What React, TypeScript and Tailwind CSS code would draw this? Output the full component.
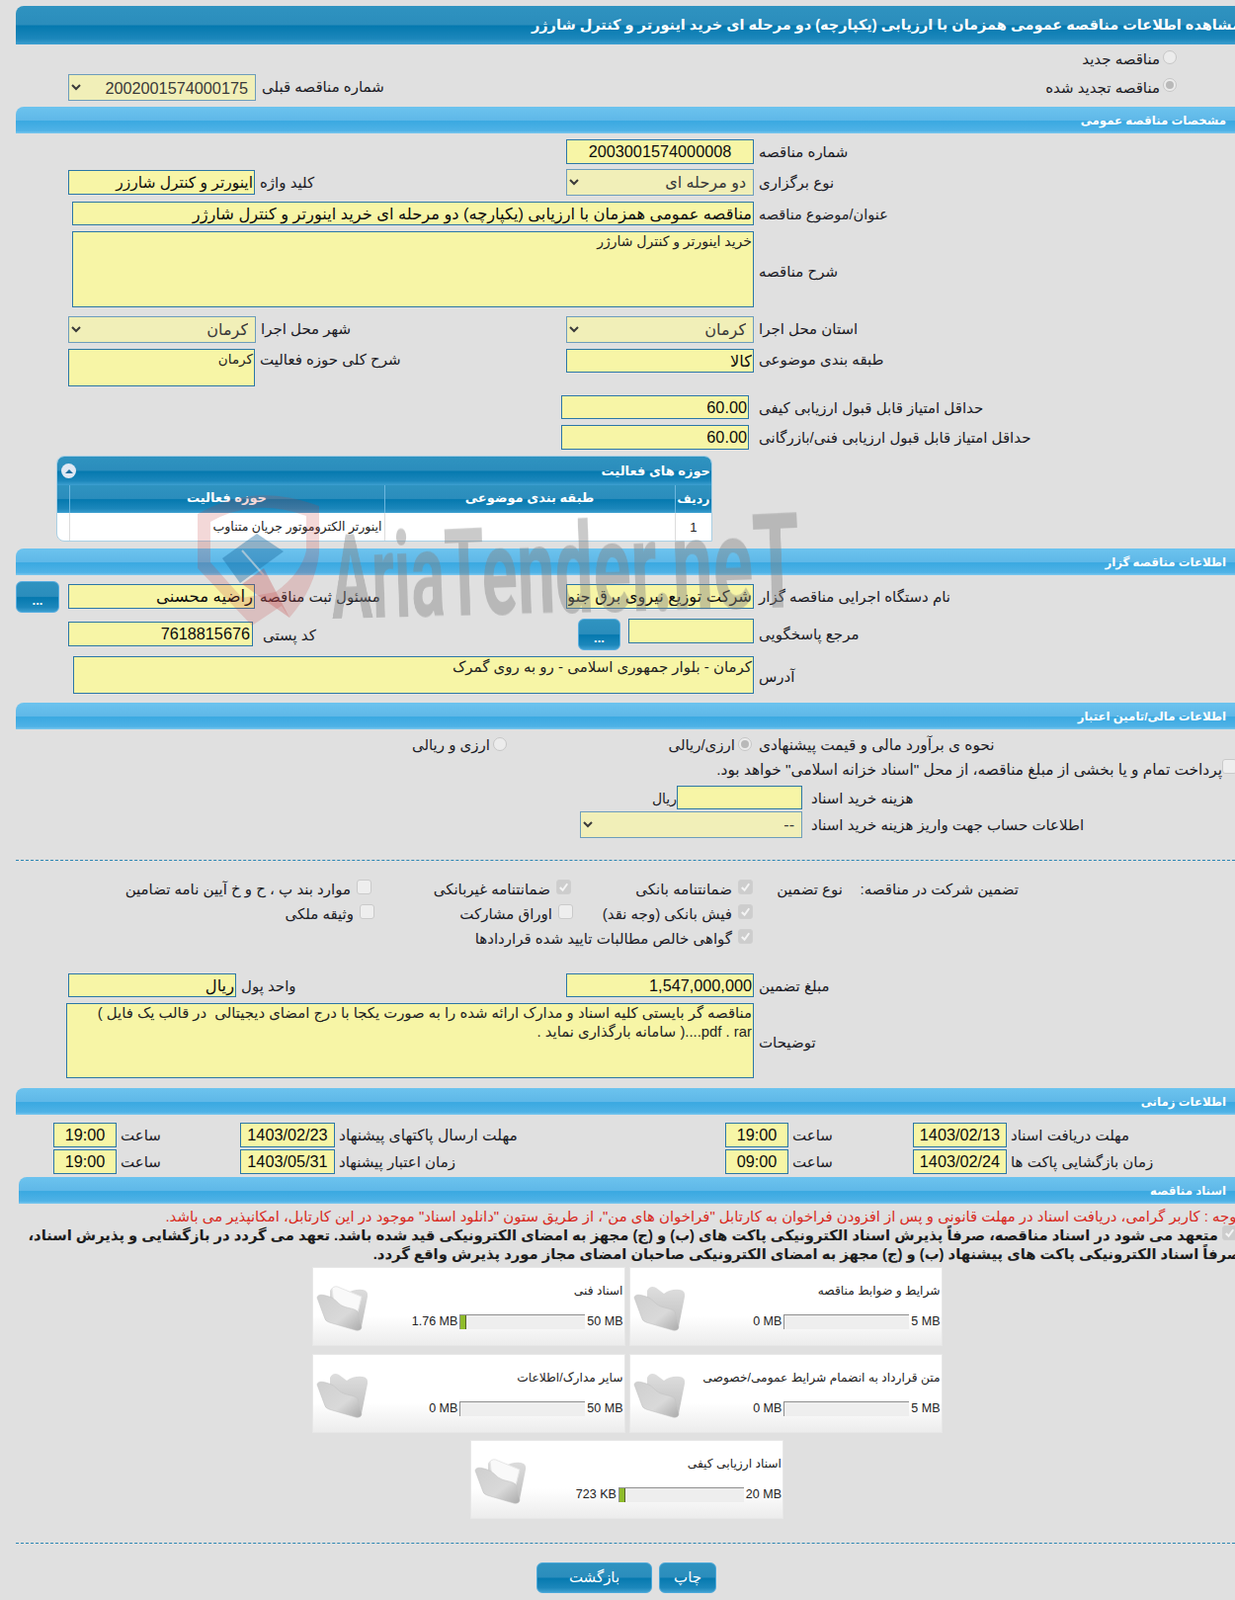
import React from 'react';

const blueBar = 'bg-[linear-gradient(#2f93c0_0%,#2b8dbc_48%,#0579af_52%,#1c87bb_85%,#3d9fd0_100%)]';
const skyBar = 'bg-[linear-gradient(#6cc3ee_0%,#5fb8e8_50%,#3aa9e1_54%,#4fb2e6_90%,#7cc8ee_100%)]';

type LabelProps = { children: React.ReactNode; className?: string; size?: string };

const Label = ({ children, className = '', size = 'text-[15px]' }: LabelProps) => (
  <span dir="rtl" className={`whitespace-nowrap pt-[1px] leading-[24px] text-[#1b1b25] ${size} ${className}`}>
    {children}
  </span>
);

type FieldProps = { value: string; className?: string; size?: string };

const Field = ({ value, className = 'h-[25px]', size = 'text-[16.25px]' }: FieldProps) => (
  <input
    readOnly
    dir="rtl"
    value={value}
    className={`shrink-0 border border-[#2b77a6] bg-[#f7f5a6] px-[1px] text-[#0c0c0c] outline-none ${size} ${className}`}
  />
);

const Area = ({ value, className = '' }: { value: string; className?: string }) => (
  <textarea
    readOnly
    dir="rtl"
    value={value}
    className={`shrink-0 resize-none overflow-hidden border border-[#2b77a6] bg-[#f7f5a6] px-[1px] leading-[19px] text-[#222] outline-none ${className}`}
  />
);

const Picker = ({ value, className = '', size = 'text-[16px]' }: FieldProps) => (
  <select
    dir="rtl"
    defaultValue={value}
    className={`h-[27px] shrink-0 border border-[#6d9dbb] bg-[#f1efb8] pl-[7px] pr-[3px] text-[#3a3a3a] outline-none ${size} ${className}`}
  >
    <option>{value}</option>
  </select>
);

const Radio = ({ checked = false }: { checked?: boolean }) => (
  <span className="mt-[2px] flex h-[14px] w-[14px] shrink-0 items-center justify-center rounded-full border border-[#c6c6c6] bg-[#ececec]">
    {checked && <span className="h-[8px] w-[8px] rounded-full bg-[#b9b9b9]" />}
  </span>
);

const Box = ({ checked = false, className = 'mt-[1px]' }: { checked?: boolean; className?: string }) => (
  <span
    className={`flex h-[15px] w-[15px] shrink-0 items-center justify-center rounded-[3px] border ${
      checked ? 'border-[#cfcfcf] bg-[#cdcdcd]' : 'border-[#cacaca] bg-[#eeeeee]'
    } ${className}`}
  >
    {checked && (
      <svg viewBox="0 0 14 14" className="h-[13px] w-[13px]">
        <path d="M3 7.5 L6 10.5 L11 3.5" fill="none" stroke="#f4f4f4" strokeWidth="2.2" />
      </svg>
    )}
  </span>
);

const Section = ({ title, className = 'ml-[16px]' }: { title: string; className?: string }) => (
  <div className={`flex h-[27px] items-center justify-end rounded-tl-[8px] pr-[9px] ${skyBar} ${className}`}>
    <span dir="rtl" className="text-[11.75px] font-bold text-white">
      {title}
    </span>
  </div>
);

const CheckItem = ({ text, checked, className }: { text: string; checked?: boolean; className: string }) => (
  <div className={`flex shrink-0 gap-[6px] ${className}`}>
    <Box checked={checked} />
    <Label className="-mt-[2px]">{text}</Label>
  </div>
);

const Folder = ({ filled }: { filled?: boolean }) => (
  <svg viewBox="0 0 54 48" className="h-[48px] w-[54px] shrink-0">
    <defs>
      <linearGradient id="folderBack" x1="0" y1="0" x2="0" y2="1">
        <stop offset="0" stopColor="#dedede" />
        <stop offset="1" stopColor="#bdbdbd" />
      </linearGradient>
      <linearGradient id="folderFront" x1="0" y1="0" x2="1" y2="1">
        <stop offset="0" stopColor="#cfcfcf" />
        <stop offset="0.6" stopColor="#d9d9d9" />
        <stop offset="1" stopColor="#ababab" />
      </linearGradient>
    </defs>
    <path d="M14 6 Q17 0 23 3 L31 9 Q38 4 47 5 Q53 6 52 12 L46 42 Q45 47 41 45 L14 30 Z" fill="url(#folderBack)" />
    {filled && <path d="M16 4 Q19 0 24 3 L46 12 L41 32 L18 20 Z" fill="#f9f9f9" stroke="#e6e6e6" />}
    <path
      d="M1 13 C2 9 7 10 13 12 C20 14 22 20 28 22 C33 24 39 24 42 27 L46 43 Q45 47 40 46 L13 38 Q9 37 8 32 Z"
      fill="url(#folderFront)"
      stroke="#c2c2c2"
      strokeWidth="0.6"
    />
  </svg>
);

type FileCardProps = { title: string; used: string; limit: string; fill?: boolean };

const FileCard = ({ title, used, limit, fill }: FileCardProps) => (
  <div className="flex h-[80px] w-[317px] shrink-0 border border-[#e7e7e7] bg-[linear-gradient(#ffffff_0%,#ffffff_62%,#ececec_100%)]">
    <div className="ml-[3px] mt-[17px]">
      <Folder filled={fill} />
    </div>
    <div className="flex min-w-0 flex-1 flex-col pr-[1px]">
      <div dir="rtl" className="mt-[13px] h-[20px] whitespace-nowrap text-[12.25px] leading-[20px] text-[#222]">
        {title}
      </div>
      <div className="mt-[14px] flex h-[15px] items-center justify-end gap-[2px] text-[12.5px] text-[#222]">
        <span>{used}</span>
        <div className="flex h-[15px] w-[127px] border-l border-t border-[#8f8f8f] bg-[#eeeeee]">
          {fill && <div className="h-full w-[6px] border-r border-[#55602c] bg-[#8fbc2b]" />}
        </div>
        <span>{limit}</span>
      </div>
    </div>
  </div>
);

const Watermark = () => (
  <div className="pointer-events-none absolute left-[195px] top-[495px] h-[140px] w-[620px]">
    <svg viewBox="0 0 140 145" className="absolute left-0 top-0 h-[145px] w-[140px]">
      <path
        fillRule="evenodd"
        d="M5 25 Q62 -8 128 17 L128 65 Q124 100 98 130 L90 118 L60 138 L5 80 Z M18 33 L18 74 L50 110 L84 104 Q110 85 115 62 L115 27 Q62 8 18 33 Z"
        fill="#c23b3b"
        opacity="0.2"
      />
      <path d="M30 70 L65 45 L92 63 L48 95 Z" fill="#1f6ea3" opacity="0.42" />
      <path d="M50 62 L72 87" stroke="#e0e0e0" strokeWidth="2" opacity="0.6" />
      <path d="M50 96 L72 80 L98 130 Z" fill="#c23b3b" opacity="0.28" />
    </svg>
    <div className="absolute left-[140px] top-[36px] origin-left whitespace-nowrap font-['Roboto',sans-serif] text-[118px] font-bold leading-[110px] text-[#7f7f7f] opacity-[0.42] [transform:perspective(900px)_rotateY(-14deg)_rotate(-2deg)_scaleX(0.53)]">
      AriaTender.neT
    </div>
  </div>
);

export default function App() {
  return (
    <div className="relative h-[1619px] w-[1250px] overflow-hidden bg-[#e0e0e0] pt-[6px] font-['Liberation_Sans','DejaVu_Sans',sans-serif]">
      <div className={`ml-[16px] flex h-[39px] items-center justify-end overflow-hidden rounded-tl-[8px] ${blueBar}`}>
        <span dir="rtl" className="-mr-[6px] whitespace-nowrap text-[14.5px] font-bold text-white">
          مشاهده اطلاعات مناقصه عمومی همزمان با ارزیابی (یکپارچه) دو مرحله ای خرید اینورتر و کنترل شارژر
        </span>
      </div>

      {/* tender type */}
      <div dir="rtl" className="mr-[59px] flex h-[30px] items-start gap-[3px] pt-[4px]">
        <Radio />
        <Label className="-mt-[2px]">مناقصه جدید</Label>
      </div>
      <div className="grid h-[33px] grid-cols-[573px_1fr]">
        <div className="flex gap-[6px] pl-[69px]">
          <Picker value="2002001574000175" className="w-[190px]" size="text-[16.25px]" />
          <Label>شماره مناقصه قبلی</Label>
        </div>
        <div dir="rtl" className="mr-[59px] flex items-start gap-[3px] pt-[2px]">
          <Radio checked />
          <Label className="-mt-[1px]">مناقصه تجدید شده</Label>
        </div>
      </div>

      <Section title="مشخصات مناقصه عمومی" />

      <div className="mt-[6px] grid h-[30px] grid-cols-[573px_1fr]">
        <div />
        <div className="flex gap-[5px]">
          <Field value="2003001574000008" className="h-[25px] w-[190px] text-center" />
          <Label>شماره مناقصه</Label>
        </div>
      </div>
      <div className="grid h-[33px] grid-cols-[573px_1fr]">
        <div className="flex gap-[5px] pl-[69px] pt-[1px]">
          <Field value="اینورتر و کنترل شارزر" className="h-[25px] w-[189px]" size="text-[15.5px]" />
          <Label>کلید واژه</Label>
        </div>
        <div className="flex gap-[5px]">
          <Picker value="دو مرحله ای" className="w-[190px]" />
          <Label className="mt-[1px]">نوع برگزاری</Label>
        </div>
      </div>
      <div className="flex h-[30px] gap-[5px] pl-[73px]">
        <Field
          value="مناقصه عمومی همزمان با ارزیابی (یکپارچه) دو مرحله ای خرید اینورتر و کنترل شارژر"
          className="h-[24px] w-[690px]"
        />
        <Label size="text-[14.5px]">عنوان/موضوع مناقصه</Label>
      </div>
      <div className="flex h-[86px] gap-[5px] pl-[73px]">
        <Area value="خرید اینورتر و کنترل شارژر" className="h-[77px] w-[690px] text-[14px]" />
        <Label className="mt-[28px]">شرح مناقصه</Label>
      </div>
      <div className="grid h-[33px] grid-cols-[573px_1fr]">
        <div className="flex gap-[5px] pl-[69px]">
          <Picker value="کرمان" className="w-[190px]" />
          <Label>شهر محل اجرا</Label>
        </div>
        <div className="flex gap-[5px]">
          <Picker value="کرمان" className="w-[190px]" />
          <Label>استان محل اجرا</Label>
        </div>
      </div>
      <div className="grid h-[47px] grid-cols-[573px_1fr]">
        <div className="flex gap-[5px] pl-[69px]">
          <Area value="کرمان" className="h-[38px] w-[189px] text-[13.5px]" />
          <Label className="-mt-[2px]">شرح کلی حوزه فعالیت</Label>
        </div>
        <div className="flex gap-[5px]">
          <Field value="کالا" className="h-[24px] w-[190px]" />
          <Label className="-mt-[2px]">طبقه بندی موضوعی</Label>
        </div>
      </div>
      <div className="flex h-[30px] gap-[10px] pl-[568px]">
        <Field value="60.00" className="h-[24px] w-[190px]" />
        <Label>حداقل امتیاز قابل قبول ارزیابی کیفی</Label>
      </div>
      <div className="flex h-[31px] gap-[10px] pl-[568px]">
        <Field value="60.00" className="h-[25px] w-[190px]" />
        <Label>حداقل امتیاز قابل قبول ارزیابی فنی/بازرگانی</Label>
      </div>

      {/* activity table */}
      <div className="ml-[57px] h-[87px] w-[664px] overflow-hidden rounded-t-[8px] rounded-bl-[8px] border border-[#a9cfe4] bg-white">
        <div className={`flex h-[29px] items-center justify-between pl-[4px] pr-[1px] ${blueBar}`}>
          <span className="flex h-[15px] w-[15px] items-center justify-center rounded-full bg-[#dfe8f3]">
            <span className="border-x-[4px] border-b-[4px] border-x-transparent border-b-[#1f6f9f]" />
          </span>
          <span dir="rtl" className="text-[13px] font-bold text-white">
            حوزه های فعالیت
          </span>
        </div>
        <table className="w-full table-fixed border-collapse">
          <colgroup>
            <col className="w-[12px]" />
            <col className="w-[319px]" />
            <col className="w-[294px]" />
            <col />
          </colgroup>
          <thead>
            <tr className={`h-[28px] ${blueBar}`}>
              <th className="border-r border-[#6db7df]" />
              <th dir="rtl" className="border-r border-[#6db7df] pb-[2px] text-[13px] font-bold text-white">
                حوزه فعالیت
              </th>
              <th dir="rtl" className="border-r border-[#6db7df] pb-[2px] text-[13px] font-bold text-white">
                طبقه بندی موضوعی
              </th>
              <th dir="rtl" className="text-[12.5px] font-bold text-white">
                ردیف
              </th>
            </tr>
          </thead>
          <tbody>
            <tr className="h-[29px] text-[12.5px] text-[#222]">
              <td className="border-r border-[#dcdcdc]" />
              <td dir="rtl" className="border-r border-[#dcdcdc] pr-[2px] text-right">
                اینورتر الکتروموتور جریان متناوب
              </td>
              <td className="border-r border-[#dcdcdc]" />
              <td className="text-center text-[13px]">1</td>
            </tr>
          </tbody>
        </table>
      </div>

      <Section title="اطلاعات مناقصه گزار" className="ml-[16px] mt-[7px]" />

      <div className="mt-[6px] grid h-[38px] grid-cols-[573px_1fr]">
        <div className="flex items-start pl-[16px]">
          <button className={`h-[32px] w-[44px] rounded-[6px] border border-[#57ade0] pt-[8px] text-[13px] font-bold text-white ${blueBar}`}>
            ...
          </button>
          <Field value="راضیه محسنی" className="ml-[9px] mt-[3px] h-[25px] w-[189px]" size="text-[16.5px]" />
          <Label className="ml-[5px] mt-[3px]">مسئول ثبت مناقصه</Label>
        </div>
        <div className="flex items-start gap-[5px] pt-[3px]">
          <Field value="شرکت توزیع نیروی برق جنوب استان کرمان" className="h-[25px] w-[190px]" />
          <Label>نام دستگاه اجرایی مناقصه گزار</Label>
        </div>
      </div>
      <div className="grid h-[38px] grid-cols-[573px_1fr]">
        <div className="flex items-start gap-[10px] pl-[69px] pt-[3px]">
          <Field value="7618815676" className="h-[25px] w-[187px] px-[2px]" />
          <Label className="mt-[1px]">کد پستی</Label>
        </div>
        <div className="flex items-start pl-[12px]">
          <button className={`h-[32px] w-[43px] rounded-[6px] border border-[#57ade0] pt-[8px] text-[13px] font-bold text-white ${blueBar}`}>
            ...
          </button>
          <Field value="" className="ml-[8px] h-[25px] w-[127px]" />
          <Label className="ml-[5px] mt-[3px]">مرجع پاسخگویی</Label>
        </div>
      </div>
      <div className="flex h-[47px] gap-[5px] pl-[74px]">
        <Area value="کرمان - بلوار جمهوری اسلامی - رو به روی گمرک" className="h-[38px] w-[689px] text-[15px]" />
        <Label className="mt-[8px]">آدرس</Label>
      </div>

      <Section title="اطلاعات مالی/تامین اعتبار" />

      {/* estimate */}
      <div className="grid h-[30px] grid-cols-[768px_1fr] pt-[6px]">
        <div dir="rtl" className="flex items-start pr-[7px]">
          <div className="flex w-[248px] shrink-0 gap-[3px]">
            <Radio checked />
            <Label className="-mt-[3px]">ارزی/ریالی</Label>
          </div>
          <div className="flex gap-[3px]">
            <Radio />
            <Label className="-mt-[3px]">ارزی و ریالی</Label>
          </div>
        </div>
        <Label className="-mt-[3px] justify-self-start" size="text-[15.4px]">نحوه ی برآورد مالی و قیمت پیشنهادی</Label>
      </div>
      <div dir="rtl" className="-mr-[2px] flex h-[27px]">
        <Box className="mt-0" />
        <Label className="-mt-[2px]" size="text-[15.4px]">پرداخت تمام و یا بخشی از مبلغ مناقصه، از محل "اسناد خزانه اسلامی" خواهد بود.</Label>
      </div>
      <div className="flex h-[26px] items-start pl-[662px]">
        <Label className="w-[23px]" size="text-[14px]">ریال</Label>
        <Field value="" className="h-[24px] w-[127px]" />
        <Label className="ml-[9px]">هزینه خرید اسناد</Label>
      </div>
      <div className="flex h-[49px] items-start pl-[587px]">
        <Picker value="--" className="w-[225px]" />
        <Label className="ml-[9px] mt-[1px]">اطلاعات حساب جهت واریز هزینه خرید اسناد</Label>
      </div>
      <div className="ml-[16px] border-t border-dashed border-[#2b86b3]" />

      {/* guarantee */}
      <div dir="rtl" className="mr-[219px] mt-[18px] flex h-[25px]">
        <Label className="-mt-[2px] w-[178px] shrink-0">تضمین شرکت در مناقصه:</Label>
        <Label className="-mt-[2px] w-[91px] shrink-0">نوع تضمین</Label>
        <CheckItem checked text="ضمانتنامه بانکی" className="w-[184px]" />
        <CheckItem checked text="ضمانتنامه غیربانکی" className="w-[202px]" />
        <CheckItem text="موارد بند پ ، ح و خ آیین نامه تضامین" className="" />
      </div>
      <div dir="rtl" className="mr-[488px] flex h-[25px]">
        <CheckItem checked text="فیش بانکی (وجه نقد)" className="w-[182px]" />
        <CheckItem text="اوراق مشارکت" className="w-[201px]" />
        <CheckItem text="وثیقه ملکی" className="" />
      </div>
      <div dir="rtl" className="mr-[488px] flex h-[46px]">
        <CheckItem checked text="گواهی خالص مطالبات تایید شده قراردادها" className="" />
      </div>

      <div className="grid h-[30px] grid-cols-[573px_1fr]">
        <div className="flex gap-[5px] pl-[69px]">
          <Field value="ریال" className="h-[24px] w-[170px]" />
          <Label>واحد پول</Label>
        </div>
        <div className="flex gap-[5px]">
          <Field value="1,547,000,000" className="h-[24px] w-[190px]" />
          <Label>مبلغ تضمین</Label>
        </div>
      </div>
      <div className="flex h-[86px] gap-[5px] pl-[67px]">
        <Area
          value={'مناقصه گر بایستی کلیه اسناد و مدارک ارائه شده را به صورت یکجا با درج امضای دیجیتالی  در قالب یک فایل )\npdf . rar....( سامانه بارگذاری نماید .'}
          className="h-[76px] w-[696px] text-[14.85px]"
        />
        <Label className="mt-[27px]">توضیحات</Label>
      </div>

      <Section title="اطلاعات زمانی" />

      {/* dates */}
      <div className="mt-[8px] grid h-[27px] grid-cols-[243px_491px_190px_1fr]">
        <div className="flex gap-[4px] pl-[54px]">
          <Field value="19:00" className="h-[25px] w-[64px] text-center" />
          <Label>ساعت</Label>
        </div>
        <div className="flex gap-[4px]">
          <Field value="1403/02/23" className="h-[25px] w-[96px] text-center" />
          <Label size="text-[15.5px]">مهلت ارسال پاکتهای پیشنهاد</Label>
        </div>
        <div className="flex gap-[4px]">
          <Field value="19:00" className="h-[25px] w-[64px] text-center" />
          <Label>ساعت</Label>
        </div>
        <div className="flex gap-[4px]">
          <Field value="1403/02/13" className="h-[25px] w-[95px] text-center" />
          <Label>مهلت دریافت اسناد</Label>
        </div>
      </div>
      <div className="grid h-[28px] grid-cols-[243px_491px_190px_1fr]">
        <div className="flex gap-[4px] pl-[54px]">
          <Field value="19:00" className="h-[25px] w-[64px] text-center" />
          <Label>ساعت</Label>
        </div>
        <div className="flex gap-[4px]">
          <Field value="1403/05/31" className="h-[25px] w-[96px] text-center" />
          <Label>زمان اعتبار پیشنهاد</Label>
        </div>
        <div className="flex gap-[4px]">
          <Field value="09:00" className="h-[25px] w-[64px] text-center" />
          <Label>ساعت</Label>
        </div>
        <div className="flex gap-[4px]">
          <Field value="1403/02/24" className="h-[25px] w-[95px] text-center" />
          <Label>زمان بازگشایی پاکت ها</Label>
        </div>
      </div>

      <Section title="اسناد مناقصه" className="ml-[19px]" />

      {/* documents */}
      <div dir="rtl" className="-mr-[6px] mt-[3px] h-[20px] whitespace-nowrap text-[14.9px] leading-[20px] text-[#d82a1e]">
        توجه : کاربر گرامی، دریافت اسناد در مهلت قانونی و پس از افزودن فراخوان به کارتابل "فراخوان های من"، از طریق ستون "دانلود اسناد" موجود در این کارتابل، امکانپذیر می باشد.
      </div>
      <div dir="rtl" className="-mr-[6px] whitespace-nowrap text-[14.75px] font-bold leading-[19px] text-[#1c1c1c]">
        <div className="flex h-[19px] pr-[4px]">
          <Box checked className="mt-[-1px]" />
          <span className="mr-[4px]">
            متعهد می شود در اسناد مناقصه، صرفاً پذیرش اسناد الکترونیکی پاکت های (ب) و (ج) مجهز به امضای الکترونیکی قید شده باشد. تعهد می گردد در بازگشایی و پذیرش اسناد،
          </span>
        </div>
        <div>صرفاً اسناد الکترونیکی پاکت های پیشنهاد (ب) و (ج) مجهز به امضای الکترونیکی صاحبان امضای مجاز مورد پذیرش واقع گردد.</div>
      </div>

      <div className="mt-[3px] flex flex-col items-center gap-[8px]">
        <div className="ml-[19px] flex gap-[4px]">
          <FileCard title="اسناد فنی" used="1.76 MB" limit="50 MB" fill />
          <FileCard title="شرایط و ضوابط مناقصه" used="0 MB" limit="5 MB" />
        </div>
        <div className="ml-[19px] flex gap-[4px]">
          <FileCard title="سایر مدارک/اطلاعات" used="0 MB" limit="50 MB" />
          <FileCard title="متن قرارداد به انضمام شرایط عمومی/خصوصی" used="0 MB" limit="5 MB" />
        </div>
        <div className="-mt-[1px] ml-[19px]">
          <FileCard title="اسناد ارزیابی کیفی" used="723 KB" limit="20 MB" fill />
        </div>
      </div>

      <div className="ml-[16px] mt-[24px] border-t border-dashed border-[#2b86b3]" />

      <div className="ml-[543px] mt-[19px] flex gap-[7px]">
        <button className={`h-[31px] w-[117px] rounded-[6px] border border-[#4aa8da] text-[15px] text-white ${blueBar}`}>بازگشت</button>
        <button className={`h-[31px] w-[58px] rounded-[6px] border border-[#4aa8da] text-[15px] text-white ${blueBar}`}>چاپ</button>
      </div>

      <Watermark />
    </div>
  );
}
